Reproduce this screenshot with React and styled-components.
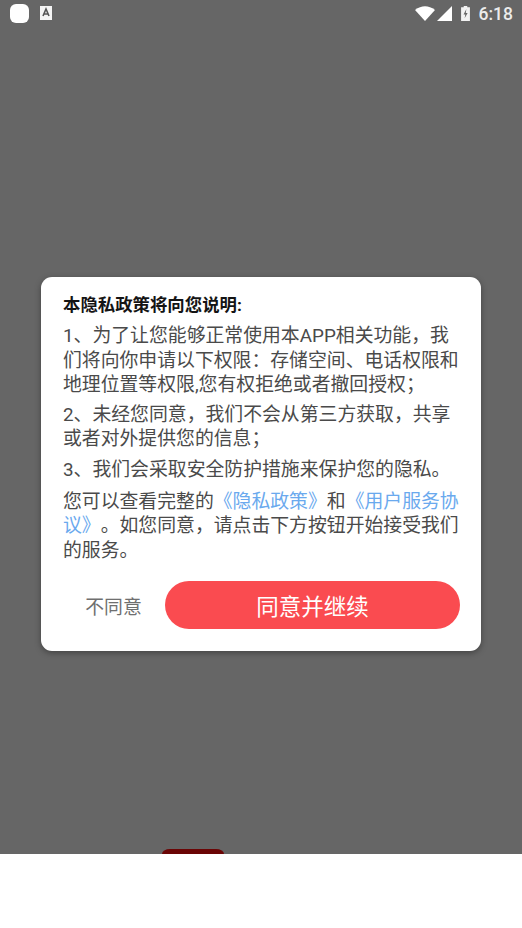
import React from "react";
import styled, { createGlobalStyle } from "styled-components";

const Global = createGlobalStyle`
  html, body { margin: 0; padding: 0; height: 100%; background: #fff; }
  #root { height: 100%; }
  * { box-sizing: border-box; }
`;

const Page = styled.div`
  position: relative;
  width: 522px;
  height: 928px;
  display: flex;
  flex-direction: column;
  overflow: hidden;
  font-family: "Roboto", "Noto Sans CJK SC", sans-serif;
  text-spacing-trim: space-all;
`;

const Scrim = styled.div`
  flex: 0 0 854px;
  background: #666666;
  display: flex;
  flex-direction: column;
  justify-content: space-between;
  align-items: flex-start;
`;

const StatusBar = styled.div`
  width: 100%;
  height: 26px;
  display: flex;
  align-items: center;
  justify-content: space-between;
  padding: 0 9px 0 10px;
`;

const StatusGroup = styled.div`
  display: flex;
  align-items: center;
`;

const AppDot = styled.div`
  width: 19px;
  height: 19px;
  border-radius: 6px;
  background: #fff;
  margin-right: 11px;
`;

const StatusIcon = styled.div`
  display: flex;
  margin-right: ${(p) => p.$after}px;
`;

const Clock = styled.span`
  color: #ececec;
  font-size: 17.5px;
  font-weight: 500;
  margin-top: 2px;
`;

const PeekingTab = styled.div`
  width: 62px;
  height: 5px;
  margin-left: 162px;
  background: #6b0505;
  border-radius: 8px 8px 0 0 / 5px 5px 0 0;
`;

const BottomBar = styled.div`
  flex: 1;
  background: #fff;
`;

const Overlay = styled.div`
  position: absolute;
  inset: 0;
  display: flex;
  align-items: center;
  justify-content: center;
`;

const Dialog = styled.div`
  width: 440px;
  height: 374px;
  background: #fff;
  border-radius: 11px;
  box-shadow: 0 2px 6px rgba(0, 0, 0, 0.35);
  padding: 16px 21px 22px 22px;
  display: flex;
  flex-direction: column;
`;

const Title = styled.div`
  font-size: 17.4px;
  line-height: 24px;
  font-weight: 700;
  color: #141414;
  margin-bottom: 7px;
`;

const Para = styled.p`
  margin: 0 1px ${(p) => p.$after}px 0;
  font-size: 18.85px;
  line-height: 24.6px;
  color: #4a4a4a;
  word-break: break-all;
`;

const Link = styled.span`
  color: #6aa9ee;
`;

const Actions = styled.div`
  margin-top: auto;
  display: flex;
  align-items: center;
`;

const Decline = styled.div`
  width: 101px;
  text-align: center;
  font-size: 18.85px;
  color: #6f6f6f;
`;

const Accept = styled.div`
  width: 295px;
  height: 48px;
  margin-left: auto;
  border-radius: 24px;
  background: #fa4b50;
  color: #fff;
  font-size: 22.5px;
  display: flex;
  align-items: center;
  justify-content: center;
`;

const AIcon = () => (
  <svg width="12" height="14" viewBox="0 0 12 14">
    <rect width="12" height="14" fill="#f4f4f4" />
    <path d="M3 10 L6 3 L9 10 M4.2 8 H7.8" stroke="#555" strokeWidth="1.6" fill="none" />
  </svg>
);

const Wifi = () => (
  <svg width="20" height="15" viewBox="0 0 20 15">
    <path d="M0 4 Q10 -3.5 20 4 L10 15 Z" fill="#fff" />
  </svg>
);

const Signal = () => (
  <svg width="15" height="15" viewBox="0 0 15 15">
    <path d="M15 0 V15 H0 Z" fill="#fff" />
  </svg>
);

const Battery = () => (
  <svg width="9" height="15" viewBox="0 0 10 17">
    <path d="M3 0 H7 V1.5 H10 V17 H0 V1.5 H3 Z" fill="#f2f2f2" />
    <path d="M6 3.5 L2.8 9.5 H4.8 L4 14 L7.4 7.8 H5.3 Z" fill="#666" />
  </svg>
);

export default function App() {
  return (
    <Page>
      <Global />
      <Scrim>
        <StatusBar>
          <StatusGroup>
            <AppDot />
            <AIcon />
          </StatusGroup>
          <StatusGroup>
            <StatusIcon $after={2}><Wifi /></StatusIcon>
            <StatusIcon $after={9}><Signal /></StatusIcon>
            <StatusIcon $after={9}><Battery /></StatusIcon>
            <Clock>6:18</Clock>
          </StatusGroup>
        </StatusBar>
        <PeekingTab />
      </Scrim>
      <BottomBar />
      <Overlay>
        <Dialog>
          <Title>本隐私政策将向您说明:</Title>
          <Para $after={5}>1、为了让您能够正常使用本APP相关功能，我们将向你申请以下权限：存储空间、电话权限和地理位置等权限,您有权拒绝或者撤回授权；</Para>
          <Para $after={6}>2、未经您同意，我们不会从第三方获取，共享或者对外提供您的信息；</Para>
          <Para $after={7}>3、我们会采取安全防护措施来保护您的隐私。</Para>
          <Para $after={0}>您可以查看完整的<Link>《隐私政策》</Link>和<Link>《用户服务协议》</Link>。如您同意，请点击下方按钮开始接受我们的服务。</Para>
          <Actions>
            <Decline>不同意</Decline>
            <Accept>同意并继续</Accept>
          </Actions>
        </Dialog>
      </Overlay>
    </Page>
  );
}
